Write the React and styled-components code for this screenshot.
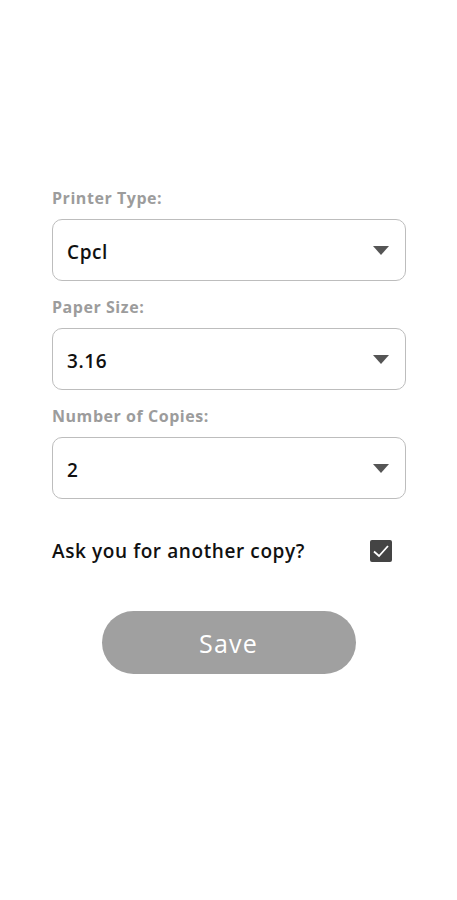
import React, { useState } from "react";
import styled, { createGlobalStyle } from "styled-components";

const GlobalStyle = createGlobalStyle`
  html, body {
    margin: 0;
    padding: 0;
    background: #ffffff;
  }
  body {
    font-family: "Open Sans", "Noto Sans", sans-serif;
  }
`;

const Page = styled.div`
  width: 457px;
  min-height: 900px;
  box-sizing: border-box;
  padding: 172px 51px 0 52px;
  display: flex;
  flex-direction: column;
`;

const Label = styled.div`
  margin: 15px 0 10px;
  height: 22px;
  line-height: 22px;
  font-size: 16px;
  font-weight: 700;
  letter-spacing: 0.55px;
  color: #9c9c9c;
`;

const Select = styled.div`
  height: 62px;
  box-sizing: border-box;
  border: 1px solid #bdbdbd;
  border-radius: 10px;
  padding: 3px 16px 0 14px;
  display: flex;
  align-items: center;
  justify-content: space-between;
`;

const Value = styled.span`
  font-size: 19px;
  font-weight: 600;
  letter-spacing: 0.6px;
  color: #111111;
`;

const Arrow = styled.span`
  width: 0;
  height: 0;
  margin-top: -3px;
  border-left: 8px solid transparent;
  border-right: 8px solid transparent;
  border-top: 9px solid #555555;
`;

const CheckRow = styled.label`
  margin-top: 39px;
  height: 26px;
  display: flex;
  align-items: center;
  justify-content: space-between;
  padding-right: 14px;
  font-size: 19px;
  font-weight: 600;
  letter-spacing: 0.6px;
  color: #111111;
  cursor: pointer;
`;

const Box = styled.span`
  width: 22px;
  height: 22px;
  border-radius: 2px;
  background: ${(p) => (p.checked ? "#444444" : "#ffffff")};
  border: 2px solid #444444;
  box-sizing: border-box;
  display: flex;
  align-items: center;
  justify-content: center;
`;

const SaveButton = styled.button`
  align-self: center;
  margin: 47px 0 0 -1px;
  width: 254px;
  height: 63px;
  border: none;
  border-radius: 32px;
  background: #a0a0a0;
  color: #ffffff;
  font-family: inherit;
  font-size: 25px;
  font-weight: 500;
  letter-spacing: 1.2px;
`;

const fields = [
  { label: "Printer Type:", value: "Cpcl" },
  { label: "Paper Size:", value: "3.16" },
  { label: "Number of Copies:", value: "2" },
];

export default function App() {
  const [checked, setChecked] = useState(true);

  return (
    <Page>
      <GlobalStyle />
      {fields.map((f) => (
        <React.Fragment key={f.label}>
          <Label>{f.label}</Label>
          <Select>
            <Value>{f.value}</Value>
            <Arrow />
          </Select>
        </React.Fragment>
      ))}
      <CheckRow onClick={() => setChecked(!checked)}>
        Ask you for another copy?
        <Box checked={checked}>
          {checked && (
            <svg width="18" height="18" viewBox="0 0 18 18">
              <path d="M2 9.5 L7 14 L16 4" fill="none" stroke="#fff" strokeWidth="1.8" />
            </svg>
          )}
        </Box>
      </CheckRow>
      <SaveButton>Save</SaveButton>
    </Page>
  );
}
